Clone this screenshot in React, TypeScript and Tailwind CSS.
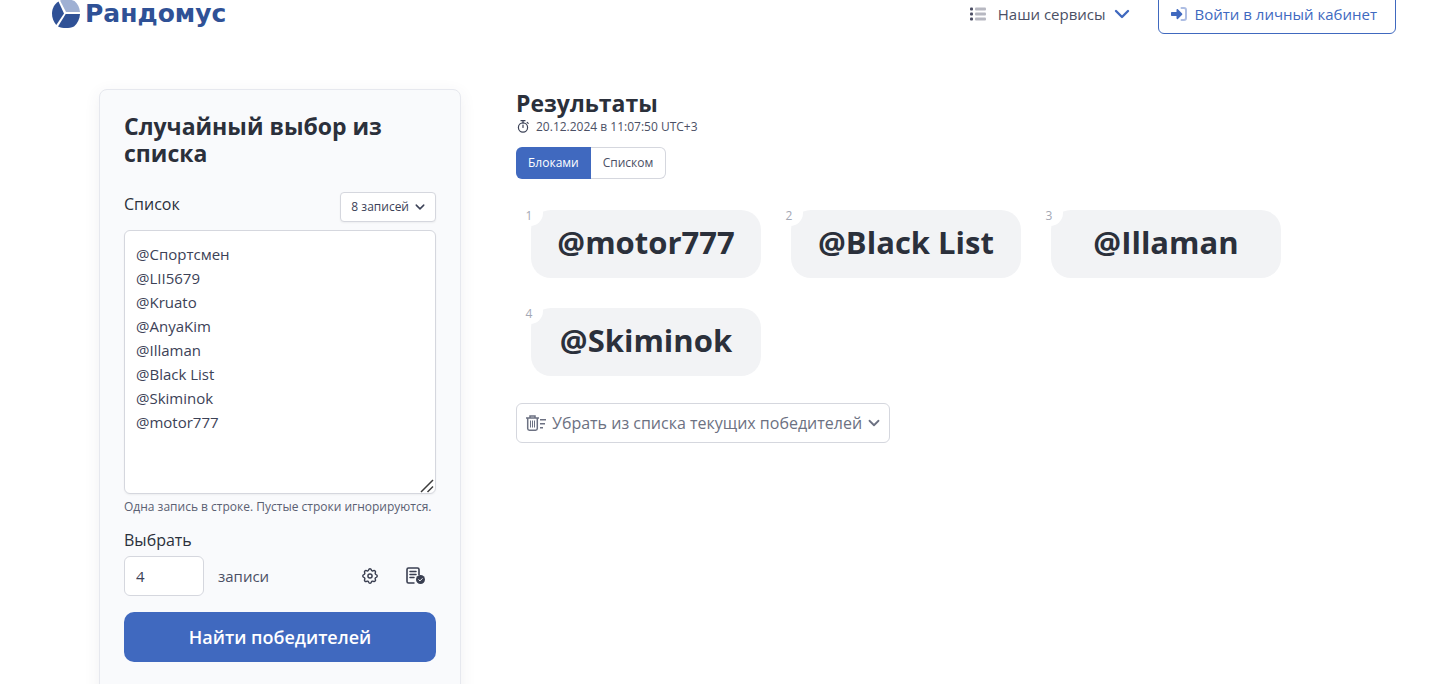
import type { ReactNode } from 'react';

const winners = ['@motor777', '@Black List', '@Illaman', '@Skiminok'];

const entries = [
  '@Спортсмен',
  '@LII5679',
  '@Kruato',
  '@AnyaKim',
  '@Illaman',
  '@Black List',
  '@Skiminok',
  '@motor777',
].join('\n');

function Chevron({ className }: { className: string }) {
  return (
    <svg viewBox="0 0 16 16" className={className} fill="none" stroke="currentColor" strokeWidth="2.4" strokeLinecap="round" strokeLinejoin="round" aria-hidden="true">
      <path d="M2 5l6 6 6-6" />
    </svg>
  );
}

function LogoMark() {
  return (
    <svg viewBox="0 0 30 30" className="h-[30px] w-[30px] shrink-0" aria-hidden="true">
      <path d="M7.500 2.500C3.500 5 1 9.500 1 14.500c0 4.500 1.600 8.500 4.300 11.500L13 14.500z" fill="#2f5196" />
      <path d="M9 1.500C13.500-.2 19 0 23.500 2c3.200 2.600 5 6.500 5.500 11H15z" fill="#9fb0d3" />
      <path d="M14.700 15H29c-.3 5-2.500 9.700-6 12.500-5 2-11.200 2-16 0z" fill="#2f5196" />
    </svg>
  );
}

function ListIcon() {
  return (
    <svg viewBox="0 0 16 16" className="h-4 w-4" aria-hidden="true">
      <g fill="#4b4d63">
        <rect x="0" y="1.500" width="3" height="3" rx="1" />
        <rect x="0" y="6.500" width="3" height="3" rx="1" />
        <rect x="0" y="11.500" width="3" height="3" rx="1" />
      </g>
      <g fill="#b7b8c1">
        <rect x="5" y="1.500" width="11" height="3" rx="1" />
        <rect x="5" y="6.500" width="11" height="3" rx="1" />
        <rect x="5" y="11.500" width="11" height="3" rx="1" />
      </g>
    </svg>
  );
}

function LoginIcon() {
  return (
    <svg viewBox="0 0 16 16" className="h-4 w-4" aria-hidden="true">
      <path d="M10.500 2H13a2 2 0 0 1 2 2v8a2 2 0 0 1-2 2h-2.500" fill="none" stroke="#adbde3" strokeWidth="2" strokeLinecap="round" />
      <path d="M1 6h4.500V3.800c0-.8.800-1.100 1.400-.6l4.200 4.200c.4.400.4.900 0 1.300l-4.200 4.200c-.6.500-1.400.2-1.400-.6V10H1c-.6 0-1-.4-1-1V7c0-.6.400-1 1-1z" fill="#4069bf" />
    </svg>
  );
}

function StopwatchIcon() {
  return (
    <svg viewBox="0 0 14 14" className="h-[14px] w-[14px]" fill="none" stroke="#3c4257" strokeWidth="1.200" strokeLinecap="round" aria-hidden="true">
      <circle cx="7" cy="7.500" r="4.600" />
      <path d="M7 5V7.500M5 .7h4M7 .7v2.200M11.200 2.300l1 1" />
    </svg>
  );
}

function GearIcon() {
  return (
    <svg viewBox="2 2 20 20" className="h-4 w-4" fill="none" stroke="currentColor" strokeWidth="1.800" strokeLinecap="round" strokeLinejoin="round" aria-hidden="true">
      <path d="M10.300 4.300c.4-1.800 2.900-1.800 3.400 0a1.700 1.700 0 0 0 2.600 1.100c1.500-.9 3.300.8 2.400 2.400a1.700 1.700 0 0 0 1 2.500c1.800.4 1.800 2.900 0 3.400a1.700 1.700 0 0 0-1 2.600c.9 1.500-.8 3.300-2.400 2.400a1.700 1.700 0 0 0-2.600 1c-.4 1.800-2.900 1.800-3.400 0a1.700 1.700 0 0 0-2.600-1c-1.500.9-3.300-.8-2.400-2.400a1.700 1.700 0 0 0-1-2.600c-1.800-.4-1.800-2.900 0-3.400a1.700 1.700 0 0 0 1-2.500c-.9-1.600.8-3.300 2.400-2.400 1 .6 2.300.1 2.600-1.100z" />
      <circle cx="12" cy="12" r="2.600" />
    </svg>
  );
}

function ReportIcon() {
  return (
    <svg viewBox="0 0 20 18" className="h-[18px] w-5" fill="none" aria-hidden="true">
      <path d="M8.500 16H2.500A1.500 1.500 0 0 1 1 14.500v-12A1.500 1.500 0 0 1 2.500 1h9A1.500 1.500 0 0 1 13 2.500V8" stroke="currentColor" strokeWidth="1.600" />
      <path d="M4 4.500h6M4 7.500h6M4 10.500h4" stroke="currentColor" strokeWidth="1.500" strokeLinecap="round" />
      <circle cx="14.500" cy="12.500" r="4.500" fill="currentColor" />
      <path d="M12.500 12.500l1.500 1.400 2.500-2.600" stroke="#f9fafc" strokeWidth="1" />
    </svg>
  );
}

function RemoveIcon() {
  return (
    <svg viewBox="0 0 20 16" className="h-4 w-5" fill="none" stroke="currentColor" strokeWidth="1.500" aria-hidden="true">
      <path d="M0 3h13M4 3V1h5v2M1.700 3v10.500c0 1.100.6 1.700 1.700 1.700h6.200c1.100 0 1.700-.6 1.700-1.700V3" />
      <path d="M4.500 5.500v7M6.500 5.500v7M8.500 5.500v7" strokeWidth="1" />
      <path d="M14 4.800h6M14 8.800h5M14 12.800h3" />
    </svg>
  );
}

function IconButton({ label, children }: { label: string; children: ReactNode }) {
  return (
    <button type="button" aria-label={label} className="flex h-9 w-10 items-center justify-center text-[#3a3f51]">
      {children}
    </button>
  );
}

function Header() {
  return (
    <header className="-mt-1.5 flex h-10 items-center justify-between pr-15 pl-[51px]">
      <a href="#" className="flex items-center gap-1 text-[#2f5196]">
        <LogoMark />
        <span className="font-['DejaVu_Sans',sans-serif] text-[25px] leading-6 font-bold">Рандомус</span>
      </a>
      <nav className="flex items-center gap-7">
        <button type="button" className="flex items-center text-[15px] text-[#4b5065]">
          <ListIcon />
          <span className="mr-2 ml-3">Наши сервисы</span>
          <Chevron className="h-4 w-4 text-[#4069bf]" />
        </button>
        <a href="#" className="flex h-10 items-center gap-2 rounded-md border border-[#4069bf] pr-[18px] pl-3 text-[15px] text-[#4069bf]">
          <LoginIcon />
          Войти в личный кабинет
        </a>
      </nav>
    </header>
  );
}

function PickerForm() {
  return (
    <form className="w-[362px] shrink-0 rounded-lg border border-[#e6e8ee] bg-[#f9fafc] px-6 pt-[23px] pb-12 shadow-[0_4px_16px_rgba(60,66,87,0.08)]">
      <h1 className="text-[23px] leading-[27px] font-bold text-[#2b303b]">Случайный выбор из списка</h1>
      <div className="mt-[25px] flex items-start justify-between">
        <label htmlFor="entries" className="text-base text-[#2b303b]">Список</label>
        <button type="button" className="flex h-[30px] items-center gap-1.5 rounded border border-[#d5d7de] bg-white px-[10px] text-xs text-[#3c4257] shadow-xs">
          8 записей
          <Chevron className="h-2.5 w-2.5" />
        </button>
      </div>
      <div className="relative mt-2">
        <textarea
          id="entries"
          defaultValue={entries}
          className="block h-[264px] w-full resize-none rounded-md border border-[#d5d7de] bg-white px-[11px] py-[11px] text-[15px] leading-6 text-[#3c4257] shadow-xs"
        />
        <svg viewBox="0 0 14 14" className="absolute right-0.5 bottom-px h-[14px] w-[14px]" stroke="#3d3d3d" strokeWidth="1.500" aria-hidden="true">
          <path d="M1 13L13 1M7.500 13L13 7.500" />
        </svg>
      </div>
      <p className="mt-1 text-xs leading-[18px] whitespace-nowrap text-[#5a6072]">Одна запись в строке. Пустые строки игнорируются.</p>
      <label htmlFor="count" className="mt-3 block text-base text-[#2b303b]">Выбрать</label>
      <div className="mt-1 flex items-center">
        <input id="count" defaultValue="4" className="h-10 w-20 rounded-md border border-[#d5d7de] bg-white px-[11px] text-[15px] text-[#3c4257]" />
        <span className="ml-[14px] grow text-[15px] text-[#4b5065]">записи</span>
        <div className="flex gap-1.5">
          <IconButton label="Настройки"><GearIcon /></IconButton>
          <IconButton label="Протокол"><ReportIcon /></IconButton>
        </div>
      </div>
      <button type="submit" className="mt-4 h-[50px] w-full rounded-[10px] bg-[#4069bf] text-lg font-semibold text-white">
        Найти победителей
      </button>
    </form>
  );
}

function Results() {
  return (
    <section className="grow">
      <h2 className="text-[23px] leading-7 font-bold text-[#2b303b]">Результаты</h2>
      <p className="flex items-center gap-1.5 text-xs leading-5 text-[#4b5065]">
        <StopwatchIcon />
        20.12.2024 в 11:07:50 UTC+3
      </p>
      <div className="mt-[10px] flex h-8 text-xs">
        <button type="button" className="rounded-l-md bg-[#4069bf] px-3 text-white">Блоками</button>
        <button type="button" className="rounded-r-md border border-l-0 border-[#d5d7de] px-3 text-[#4b5065]">Списком</button>
      </div>
      <ol className="mt-[31px] flex flex-wrap gap-[30px] px-[15px]">
        {winners.map((name, i) => (
          <li key={name} className="relative flex h-[68px] w-[230px] items-center justify-center rounded-[20px] bg-[#f2f3f5] pb-[3px] text-[31px] font-bold text-[#2b303b]">
            <span className="absolute -top-2.5 -left-4 flex h-[26px] w-7 items-end justify-center rounded-full bg-white pb-0.5 text-xs font-normal text-[#a4a8b5]">{i + 1}</span>
            {name}
          </li>
        ))}
      </ol>
      <button type="button" className="mt-[27px] flex h-10 items-center rounded-md border border-[#d5d7de] px-[9px] text-base text-[#6c7182]">
        <RemoveIcon />
        <span className="mx-1.5">Убрать из списка текущих победителей</span>
        <Chevron className="h-3 w-3" />
      </button>
    </section>
  );
}

export default function App() {
  return (
    <div className="flex h-screen flex-col overflow-hidden bg-white font-['Open_Sans',sans-serif]">
      <Header />
      <main className="mt-[55px] flex items-start gap-[55px] pr-[100px] pl-[99px]">
        <PickerForm />
        <Results />
      </main>
    </div>
  );
}
